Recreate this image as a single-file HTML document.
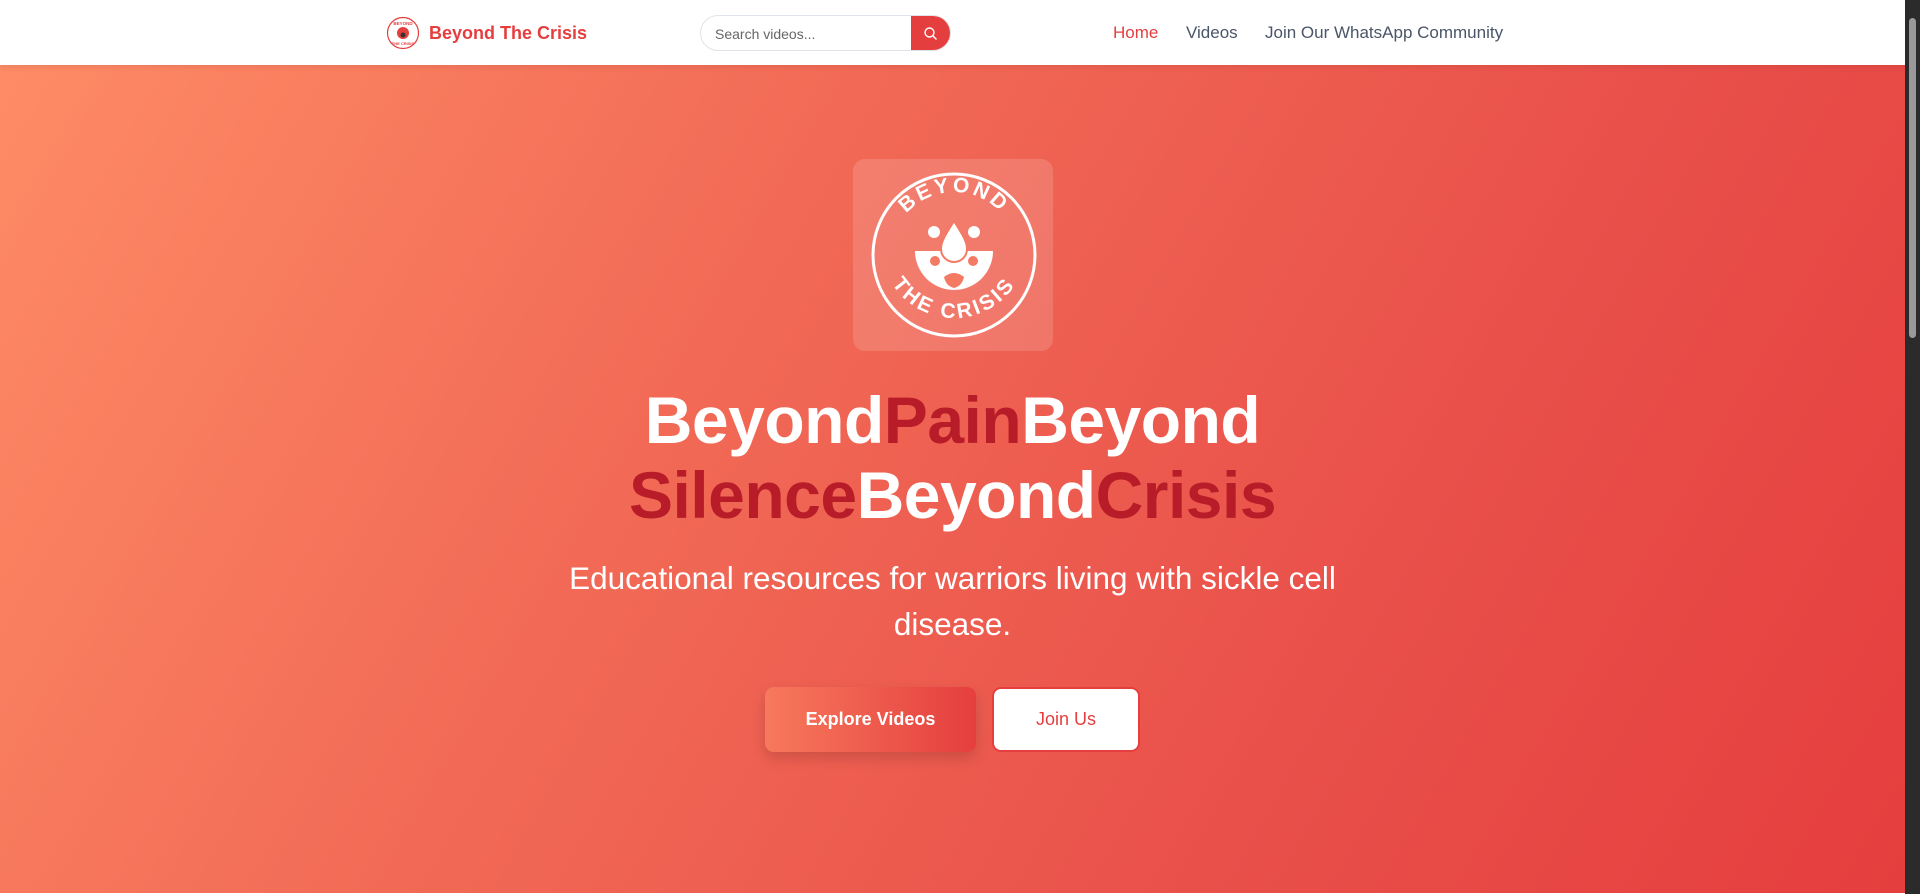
<!DOCTYPE html>
<html><head><meta charset="utf-8"><style>
*{margin:0;padding:0;box-sizing:border-box}
html,body{width:1920px;height:894px;overflow:hidden;font-family:"Liberation Sans",sans-serif}
.page{position:absolute;left:0;top:0;width:1905px;height:894px;background:#fff}
.sb{position:absolute;right:0;top:0;width:15px;height:894px;background:#2b2b2b}
.sb i{position:absolute;left:4px;top:18px;width:7px;height:320px;background:#9a9a9a;border-radius:4px}
nav{position:absolute;left:0;top:0;width:1905px;height:65px;background:#fff;box-shadow:0 2px 6px rgba(0,0,0,.08);z-index:2}
.brand{position:absolute;left:429px;top:23px;font-size:18px;font-weight:bold;color:#e53e3e}
.search{position:absolute;left:700px;top:15px;width:251px;height:36px;border:1px solid #dfe3ea;border-radius:18px;overflow:hidden}
.search span{position:absolute;left:14px;top:10px;font-size:14px;color:#666}
.search b{position:absolute;right:0;top:0;width:39px;height:36px;background:#e53e3e}
.links a{position:absolute;top:23px;font-size:17px;color:#4a5568;text-decoration:none}
.hero{position:absolute;left:0;top:65px;width:1905px;height:828px;background:linear-gradient(120deg,#fe8b66 0%,#f26b56 35%,#e9504a 70%,#e53e3e 100%)}
.box{position:absolute;left:853px;top:94px;width:200px;height:192px;border-radius:12px;background:rgba(255,255,255,.15)}
h1{position:absolute;left:0;width:1905px;top:318px;text-align:center;font-size:66px;line-height:75px;font-weight:bold;color:#fff;letter-spacing:-.5px}
h1 span{color:#b71c28}
p.sub{position:absolute;left:450px;width:1005px;top:490px;text-align:center;font-size:31.5px;line-height:46px;color:#fff}
.btn{position:absolute;top:622px;height:65px;border-radius:9px;font-size:18px;font-weight:bold;text-align:center;line-height:65px}
</style></head><body>
<div class="page">
<nav>
<svg style="position:absolute;left:386px;top:16px" width="34" height="34" viewBox="0 0 34 34"><circle cx="17" cy="17" r="15.5" fill="#fff" stroke="#e53e3e" stroke-width="1.2"/><circle cx="17" cy="17" r="6" fill="#e53e3e"/><circle cx="17" cy="19" r="2.5" fill="#333"/><text x="17" y="9" font-size="4.5" text-anchor="middle" fill="#e53e3e" font-weight="bold">BEYOND</text><text x="17" y="29" font-size="4" text-anchor="middle" fill="#e53e3e" font-weight="bold">THE CRISIS</text></svg>
<div class="brand">Beyond The Crisis</div>
<div class="search"><span>Search videos...</span><b><svg style="position:absolute;left:12px;top:10px" width="15" height="15" viewBox="0 0 15 15"><circle cx="6.5" cy="6.5" r="4.5" fill="none" stroke="#fff" stroke-width="1.4"/><path d="M10 10l3.5 3.5" stroke="#fff" stroke-width="1.4"/></svg></b></div>
<div class="links"><a style="left:1113px;color:#e53e3e">Home</a><a style="left:1186px">Videos</a><a style="left:1265px">Join Our WhatsApp Community</a></div>
</nav>
<div class="hero">
<div class="box"><svg width="200" height="192" viewBox="0 0 200 192">
<defs><path id="top" d="M38 96 A63 63 0 0 1 164 96"/><path id="bot" d="M28 86 A73 73 0 0 0 174 86"/></defs>
<circle cx="101" cy="96" r="81" fill="none" stroke="#fff" stroke-width="3"/>
<text font-size="21" font-weight="bold" fill="#fff" letter-spacing="3"><textPath href="#top" startOffset="50%" text-anchor="middle">BEYOND</textPath></text>
<text font-size="21" font-weight="bold" fill="#fff" letter-spacing="3"><textPath href="#bot" startOffset="50%" text-anchor="middle">THE CRISIS</textPath></text>
<path d="M62 92 A39 39 0 0 0 140 92 Z" fill="#fff"/>
<path d="M101 62 C93 75 88 82 88 90 a13 13 0 0 0 26 0 c0-8-5-15-13-28z" fill="#fff" stroke="#f47a63" stroke-width="2"/>
<circle cx="81" cy="73" r="6" fill="#fff"/><circle cx="121" cy="73" r="6" fill="#fff"/>
<circle cx="82" cy="102" r="5" fill="#f47a63"/><circle cx="120" cy="102" r="5" fill="#f47a63"/>
<path d="M91 118 q10 -8 20 0 q-2 9 -10 11 q-8 -2 -10 -11z" fill="#f47a63"/>
</svg></div>
<h1>Beyond<span>Pain</span>Beyond<br><span>Silence</span>Beyond<span>Crisis</span></h1>
<p class="sub">Educational resources for warriors living with sickle cell<br>disease.</p>
<div class="btn" style="left:765px;width:211px;background:linear-gradient(90deg,#f7795c,#e53e3e);color:#fff;box-shadow:0 6px 14px rgba(0,0,0,.15)">Explore Videos</div>
<div class="btn" style="left:992px;width:148px;background:#fff;color:#e53e3e;border:2px solid #e53e3e;line-height:61px;font-weight:normal">Join Us</div>
</div>
</div>
<div class="sb"><i></i></div>
</body></html>
